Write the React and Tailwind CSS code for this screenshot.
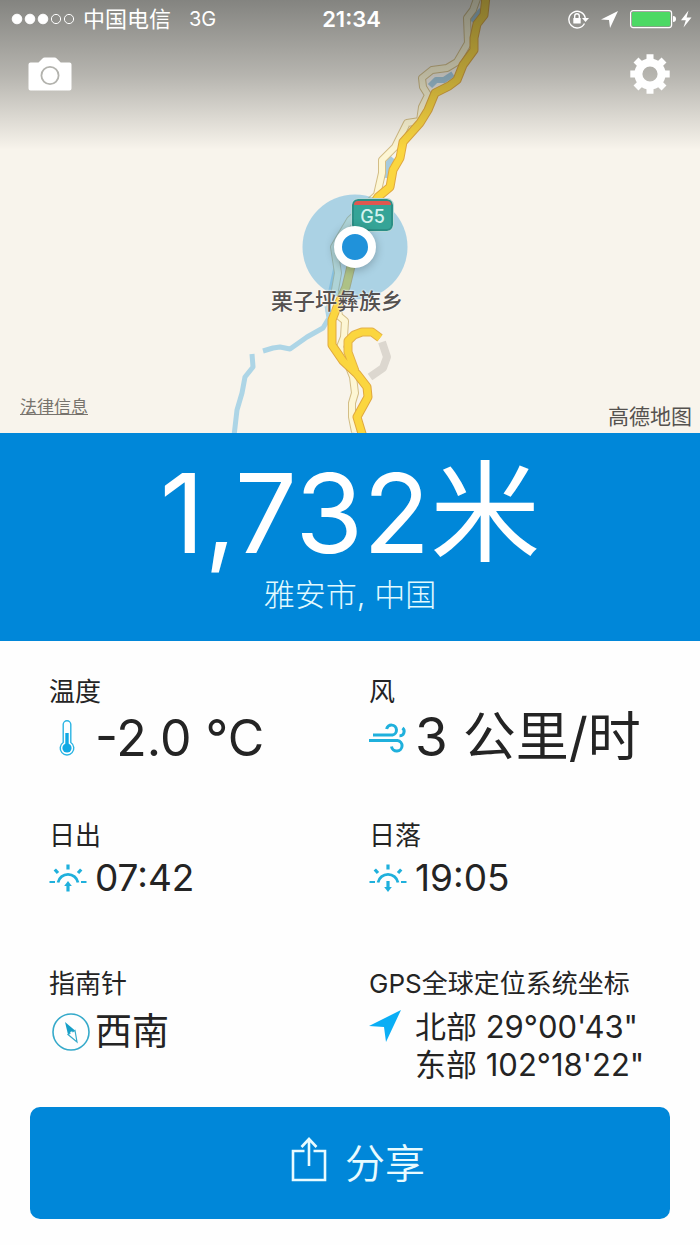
const highway =
  "M486 -4L484 15L477 24L474 38L474 50L463 65L457 80L449 86L435 93L428 110L420 123L403 142L400 158L393 170L390 187L378 197L366 215L352 262L346 287L337 307L332 320L332 345L343 361L357 374L367 387L368 397L357 417L363 437";
const loop = "M355 371L348 352L348 341L354 335L362 332L372 332L380 338";
const sideRoad =
  "M478 -4L473 10L467 18L468 43L457 62L447 68L432 70L422 78L423 87L428 95L422 107L420 121L407 123L395 147L382 160L382 173L377 195L350 220L334 247L338 273L335 290L339 316L345 321L344 337L340 347L347 362L353 377L355 393L352 403L352 417L355 432";

function MapDrawing() {
  return (
    <svg
      className="absolute inset-0 h-full w-full"
      viewBox="0 0 700 433"
      preserveAspectRatio="xMidYMid slice"
      fill="none"
      strokeLinejoin="round"
      aria-hidden="true">
      <g stroke="#add5e6" strokeWidth="5">
        <path d="M327 306L329 318L323 328L307 337L290 349L280 347L273 348L263 351" />
        <path d="M252 354L253 367L245 377L242 393L237 410L234 436" />
      </g>
      <path d="M336 262L330 290L327 312" stroke="#b5d2e0" strokeWidth="3" />
      <path d="M453 74L444 80L436 80L430 86M393 158L388 164L386 178M482 10L471 21" stroke="#a5cadd" strokeWidth="6" />
      <path d="M382 342L387 357L383 368L370 377" stroke="#dcd7cf" strokeWidth="8" />
      <path d={sideRoad} stroke="#d3bd86" strokeWidth="8" />
      <path d={sideRoad} stroke="#fdf6d4" strokeWidth="6" />
      <path d={loop} stroke="#e3b04a" strokeWidth="9" />
      <path d={highway} stroke="#e0a83f" strokeWidth="9" />
      <path d={loop} stroke="#fbd63f" strokeWidth="7" />
      <path d={highway} stroke="#fbd63f" strokeWidth="7" />
    </svg>
  );
}

function SignalDots() {
  return (
    <svg width="64" height="12" viewBox="0 0 64 12" fill="none" stroke="#fff" aria-hidden="true">
      <g fill="#fff">
        <circle cx="6" cy="6" r="4.8" />
        <circle cx="19" cy="6" r="4.8" />
        <circle cx="32" cy="6" r="4.8" />
      </g>
      <circle cx="45" cy="6" r="4.6" />
      <circle cx="58" cy="6" r="4.6" />
    </svg>
  );
}

function RotationLockIcon() {
  return (
    <svg width="22" height="20" viewBox="0 0 22 20" fill="none" aria-hidden="true">
      <path d="M17.5 14.5A8.3 8.3 0 1 1 18.3 9" stroke="#fff" strokeWidth="1.4" />
      <path d="M15 9H22L18.5 13Z" fill="#fff" />
      <rect x="6.3" y="9" width="7.4" height="5.5" rx="0.6" fill="#fff" />
      <path d="M7.7 9V7A2.3 2.3 0 0 1 12.3 7V9" stroke="#fff" strokeWidth="1.4" />
    </svg>
  );
}

function ArrowIcon({ className, width, height }) {
  return (
    <svg className={className} width={width} height={height} viewBox="0 0 32 32" aria-hidden="true">
      <path d="M32 0L17 32L15 17L0 16Z" fill="currentColor" />
    </svg>
  );
}

function BatteryIcon() {
  return (
    <svg width="62" height="20" viewBox="0 0 62 20" fill="none" aria-hidden="true">
      <rect x="0.6" y="1.6" width="41" height="17" rx="2.5" stroke="#fff" strokeWidth="1.2" />
      <rect x="2" y="3" width="38.2" height="14.2" rx="1.4" fill="#4cd964" />
      <path d="M43 7Q46 7 46 10Q46 13 43 13Z" fill="#fff" />
      <path d="M58.5 1.5L51 11.2H55.8L53.5 18.5L61.5 8.5H56.6Z" fill="#fff" />
    </svg>
  );
}

function CameraIcon() {
  return (
    <svg width="44" height="34" viewBox="0 0 44 34" aria-hidden="true">
      <path
        fill="#fff"
        d="M2.5 5.5H10.5L14.5 1.4Q15.4 0.5 16.6 0.5H26.6Q27.8 0.5 28.7 1.4L32.7 5.5H41.5Q43.5 5.5 43.5 7.5V31.5Q43.5 33.5 41.5 33.5H2.5Q0.5 33.5 0.5 31.5V7.5Q0.5 5.5 2.5 5.5Z" />
      <circle cx="22" cy="18.5" r="8.6" fill="none" stroke="#b3b3ae" strokeWidth="1.8" />
    </svg>
  );
}

function GearIcon() {
  return (
    <svg width="40" height="40" viewBox="-20 -20 40 40" fill="none" stroke="#fff" aria-hidden="true">
      <circle r="11.6" strokeWidth="8" />
      <path
        strokeWidth="7"
        d="M0 -13V-19.7M0 13V19.7M-13 0H-19.7M13 0H19.7M9.2 9.2L14 14M-9.2 9.2L-14 14M9.2 -9.2L14 -14M-9.2 -9.2L-14 -14" />
    </svg>
  );
}

function ThermometerIcon() {
  return (
    <svg width="36" height="36" viewBox="0 0 36 36" fill="none" aria-hidden="true">
      <path d="M14.2 22.5V4.6A3.8 3.8 0 0 1 21.8 4.6V22.5A6.8 6.8 0 1 1 14.2 22.5Z" stroke="#2ab4e3" strokeWidth="1.4" />
      <circle cx="18" cy="28" r="4.6" fill="#12a9e4" />
      <path d="M18 26V13" stroke="#12a9e4" strokeWidth="3.4" />
    </svg>
  );
}

function WindIcon() {
  return (
    <svg width="38" height="30" viewBox="0 0 38 30" fill="none" stroke="#1fb0dc" strokeWidth="3" aria-hidden="true">
      <path d="M4 12H23.5A5 5 0 1 0 17.6 6" />
      <path d="M0 17.5H28.5A5.3 5.3 0 1 1 22.5 23.5" />
      <path d="M33.5 5A4.4 4.4 0 0 1 30.5 12.8" />
    </svg>
  );
}

function SunIcon({ setting }) {
  return (
    <svg width="38" height="28" viewBox="0 0 38 28" fill="none" stroke="#1fb0dc" strokeWidth="2.8" aria-hidden="true">
      <path d="M9 18.5A10.2 10.2 0 0 1 29 18.5" />
      <path strokeWidth="3.2" d="M19 0.5V5.5M5.8 5.5L9 9M32.2 5.5L29 9" />
      <path strokeWidth="2.2" d="M0.5 18H6M32 18H37.5" />
      <path d={setting ? "M19 17V24" : "M19 20V27.5"} strokeWidth="3.2" />
      <path d={setting ? "M15.2 23H22.8L19 28Z" : "M15.2 22H22.8L19 17Z"} fill="#1fb0dc" stroke="none" />
    </svg>
  );
}

function CompassIcon() {
  return (
    <svg width="42" height="40" viewBox="0 0 42 40" fill="none" aria-hidden="true">
      <circle cx="22" cy="20" r="18" stroke="#36aaca" strokeWidth="1.6" />
      <path d="M16 10L26 18.5L19 22.5Z" fill="#169fc8" />
      <path d="M26 18.5L28 30L19 22.5Z" stroke="#36aaca" strokeWidth="1.2" />
      <circle cx="22.5" cy="20.7" r="1.2" fill="#fff" />
    </svg>
  );
}

function ShareIcon() {
  return (
    <svg className="mb-2.5" width="36" height="46" viewBox="0 0 36 46" fill="none" stroke="#e8fbff" strokeWidth="2.6" aria-hidden="true">
      <path d="M13.5 15H2V44H34V15H22.5" />
      <path d="M18 30V3M10.5 11L18 3L25.5 11" />
    </svg>
  );
}

function Reading({ label, icon, children, size }) {
  return (
    <div className="pl-[19px]">
      <dt className="text-[26px] leading-8 whitespace-nowrap">{label}</dt>
      <dd className={`flex items-center whitespace-nowrap ${size}`}>
        <span className="flex w-[46px] shrink-0">{icon}</span>
        {children}
      </dd>
    </div>
  );
}

export default function App() {
  return (
    <main className="min-h-screen bg-[#fefefe] font-['Inter','Noto_Sans_CJK_SC',sans-serif] text-[#242424]">
      <section className="relative flex aspect-[700/433] flex-col overflow-hidden bg-[#f8f4ec]">
        <MapDrawing />

        <div className="absolute top-[57%] left-1/2 ml-[5px] size-[105px] -translate-1/2 rounded-full bg-[#4ea8db]/45" />
        <div className="absolute top-[46%] left-1/2 ml-0.5 flex h-8 w-[41px] flex-col overflow-hidden rounded-md border-2 border-[#2b8f86] bg-[#35a497] outline outline-[#b8d8d8]">
          <span className="h-1 shrink-0 bg-[#e0574f]" />
          <span className="text-center text-[18px] leading-6 font-medium text-[#d5f3f0]">G5</span>
        </div>
        <div className="absolute top-[57%] left-1/2 ml-[5px] size-[42px] -translate-1/2 rounded-full border-8 border-white bg-[#2092da] shadow-[0_2px_10px_rgba(0,0,0,0.25)]" />
        <span className="absolute top-[66%] left-1/2 ml-[-13px] -translate-x-1/2 text-[22px] leading-[30px] font-medium whitespace-nowrap text-[#55514f] [text-shadow:0_0_2px_#fff,0_0_2px_#fff]">
          栗子坪彝族乡
        </span>
        <div className="absolute inset-x-0 top-0 h-[150px] bg-linear-to-b from-[#181c1c]/52 via-[#1c2020]/30 to-transparent" />

        <div className="relative grid h-[38px] grid-cols-[1fr_auto_1fr] items-center pr-2 pl-[11px] text-[20px] text-white">
          <div className="flex items-center gap-2">
            <SignalDots />
            <span className="text-[22px]">中国电信</span>
            <span className="ml-2.5">3G</span>
          </div>
          <time className="text-[22px] font-semibold">21:34</time>
          <div className="flex items-center justify-end gap-3">
            <RotationLockIcon />
            <ArrowIcon width="17" height="17" />
            <BatteryIcon />
          </div>
        </div>

        <div className="relative flex items-center justify-between px-7 pt-4">
          <button type="button" aria-label="相机">
            <CameraIcon />
          </button>
          <button type="button" aria-label="设置" className="mr-0.5">
            <GearIcon />
          </button>
        </div>

        <div className="relative mt-auto flex items-end justify-between pr-2 pb-1 pl-5">
          <a href="#legal" className="mb-2.5 text-[17px] leading-6 text-[#77736d] underline">
            法律信息
          </a>
          <span className="text-[21px] leading-6 text-[#55524f]">高德地图</span>
        </div>
      </section>

      <section className="bg-[#0087d9] pt-6 pb-[26px] text-center text-white">
        <h1 className="text-[110px] leading-[112px] whitespace-nowrap">1,732米</h1>
        <p className="pt-1.5 text-[31px] leading-10 font-light text-[#e2faff]">雅安市, 中国</p>
      </section>

      <dl className="grid grid-cols-2 gap-y-10 px-[30px] pt-[35px]">
        <Reading label="温度" size="mb-3 h-[60px] text-[50px]" icon={<ThermometerIcon />}>
          -2.0 °C
        </Reading>
        <Reading label="风" size="mb-3 h-[60px] text-[53px]" icon={<WindIcon />}>
          3 公里/时
        </Reading>
        <Reading label="日出" size="mb-6 h-[52px] text-[37px]" icon={<SunIcon />}>
          07:42
        </Reading>
        <Reading label="日落" size="mb-6 h-[52px] text-[37px]" icon={<SunIcon setting />}>
          19:05
        </Reading>
        <Reading label="指南针" size="h-16 text-[37px]" icon={<CompassIcon />}>
          西南
        </Reading>
        <Reading
          label="GPS全球定位系统坐标"
          size="pt-2 text-[31px] leading-[38px]"
          icon={<ArrowIcon className="-mt-9 text-[#0aaef5]" width="32" height="32" />}>
          <span>
            北部 29°00'43"
            <br />
            东部 102°18'22"
          </span>
        </Reading>
      </dl>

      <div className="px-[30px] pt-[23px] pb-[26px]">
        <button
          type="button"
          className="flex h-[112px] w-full items-center justify-center gap-[18px] rounded-[10px] bg-[#0087d9] pt-0.5 pl-4 text-[40px] font-[350] text-[#e8fbff]">
          <ShareIcon />
          分享
        </button>
      </div>
    </main>
  );
}
